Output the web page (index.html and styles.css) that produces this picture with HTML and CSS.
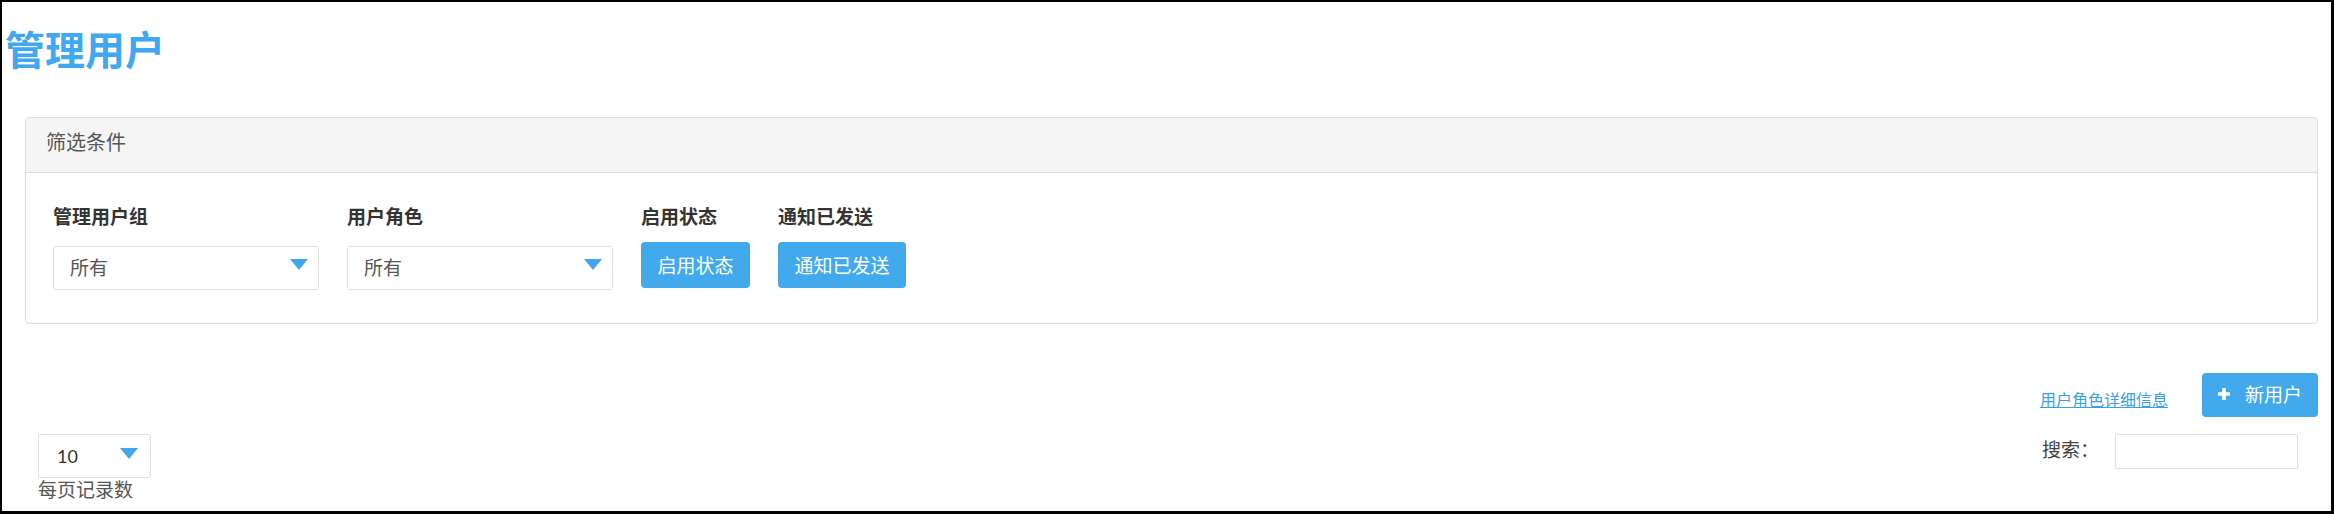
FILE: index.html
```html
<!DOCTYPE html>
<html lang="zh-CN">
<head>
<meta charset="utf-8">
<title>管理用户</title>
<link rel="stylesheet" href="styles.css">
</head>
<body>
<div class="frame">
  <h1 class="page-title">管理用户</h1>

  <section class="panel">
    <div class="panel-heading">筛选条件</div>
    <div class="panel-body">
      <div class="filter-group">
        <label class="filter-label">管理用户组</label>
        <div class="select select-wide"><span>所有</span></div>
      </div>
      <div class="filter-group">
        <label class="filter-label">用户角色</label>
        <div class="select select-wide"><span>所有</span></div>
      </div>
      <div class="filter-group">
        <label class="filter-label">启用状态</label>
        <button class="btn btn-filter">启用状态</button>
      </div>
      <div class="filter-group">
        <label class="filter-label">通知已发送</label>
        <button class="btn btn-filter">通知已发送</button>
      </div>
    </div>
  </section>

  <div class="toolbar">
    <a class="role-link" href="#">用户角色详细信息</a>
    <button class="btn btn-new">
      <svg class="plus" width="12" height="12" viewBox="0 0 12 12" aria-hidden="true">
        <path d="M4.2 0h3.6v4.2H12v3.6H7.8V12H4.2V7.8H0V4.2h4.2z" fill="#fff"/>
      </svg>
      <span>新用户</span>
    </button>
  </div>

  <div class="table-controls">
    <div class="length">
      <div class="select select-length"><span>10</span></div>
      <div class="length-label">每页记录数</div>
    </div>
    <div class="search">
      <label class="search-label">搜索：</label>
      <div class="search-input"></div>
    </div>
  </div>
</div>
</body>
</html>
```

FILE: styles.css
```css
html, body {
  margin: 0;
  padding: 0;
  background: #fff;
}

body {
  font-family: Lato, "Noto Sans CJK SC", sans-serif;
  color: #333;
}

.frame {
  box-sizing: border-box;
  width: 2334px;
  height: 514px;
  border: 2px solid #000;
  border-right-width: 3px;
  border-bottom-width: 3px;
  overflow: hidden;
  background: #fff;
}

.page-title {
  margin: 24px 0 0 3px;
  font-family: "Noto Sans CJK SC", sans-serif;
  font-size: 40px;
  line-height: 44px;
  font-weight: 700;
  color: #3fa8f0;
}

.panel {
  margin: 47px 13px 0 23px;
  border: 1px solid #dcdcdc;
  border-radius: 4px;
  background: #fff;
}

.panel-heading {
  box-sizing: border-box;
  height: 55px;
  padding: 10px 20px 0;
  background: #f5f5f5;
  border-bottom: 1px solid #dcdcdc;
  border-radius: 4px 4px 0 0;
  font-family: "Noto Sans CJK SC", sans-serif;
  font-size: 20px;
  line-height: 28px;
  color: #555;
}

.panel-body {
  display: flex;
  align-items: flex-start;
  gap: 28px;
  padding: 31px 27px 33px 27px;
}

.filter-group {
  display: flex;
  flex-direction: column;
  align-items: flex-start;
}

.filter-label {
  font-family: "Noto Sans CJK SC", sans-serif;
  font-size: 19px;
  line-height: 24px;
  font-weight: 700;
  color: #333;
}

.select {
  position: relative;
  box-sizing: border-box;
  height: 44px;
  border: 1px solid #dddddd;
  border-radius: 3px;
  background: #fff;
  font-size: 19px;
  line-height: 42px;
  color: #555;
}

.select::after {
  content: "";
  position: absolute;
  right: 10px;
  top: 12px;
  width: 0;
  height: 0;
  border-left: 9.5px solid transparent;
  border-right: 9.5px solid transparent;
  border-top: 11px solid #42a6ec;
}

.select-wide {
  width: 266px;
  margin-top: 18px;
  padding-left: 16px;
}

.btn {
  box-sizing: border-box;
  border: 0;
  border-radius: 4px;
  background: #42aaec;
  color: #fff;
  font-family: "Noto Sans CJK SC", sans-serif;
  font-size: 19px;
  cursor: pointer;
}

.btn-filter {
  height: 46px;
  margin-top: 14px;
  padding: 0 16.5px;
  line-height: 46px;
}

.toolbar {
  display: flex;
  justify-content: flex-end;
  align-items: center;
  margin: 49px 13px 0 23px;
}

.role-link {
  margin-top: 7px;
  margin-right: 34px;
  font-family: "Noto Sans CJK SC", sans-serif;
  font-size: 16px;
  line-height: 20px;
  color: #3aa0e8;
  text-decoration: underline;
}

.btn-new {
  display: flex;
  align-items: center;
  height: 44px;
  padding: 0 16px 0 16px;
  line-height: 44px;
}

.btn-new .plus {
  margin-top: -3px;
  margin-right: 15px;
}

.btn-new span {
  margin-top: -3px;
}

.table-controls {
  display: flex;
  justify-content: space-between;
  align-items: flex-start;
  margin-top: 17px;
  padding: 0 33px 0 36px;
}

.length {
  display: flex;
  flex-direction: column;
}

.select-length {
  width: 113px;
  padding-left: 18px;
  font-size: 18px;
  color: #333;
}

.select-length::after {
  right: 12px;
  top: 13px;
  border-left-width: 9px;
  border-right-width: 9px;
  border-top-width: 11px;
}

.length-label {
  font-family: "Noto Sans CJK SC", sans-serif;
  font-size: 19px;
  line-height: 22px;
  color: #555;
}

.search {
  display: flex;
  align-items: flex-start;
}

.search-label {
  margin-top: 3px;
  margin-right: 16px;
  font-family: "Noto Sans CJK SC", sans-serif;
  font-size: 19px;
  line-height: 24px;
  color: #444;
}

.search-input {
  box-sizing: border-box;
  width: 183px;
  height: 35px;
  border: 1px solid #dddddd;
  border-radius: 2px;
  background: #fff;
}
```
